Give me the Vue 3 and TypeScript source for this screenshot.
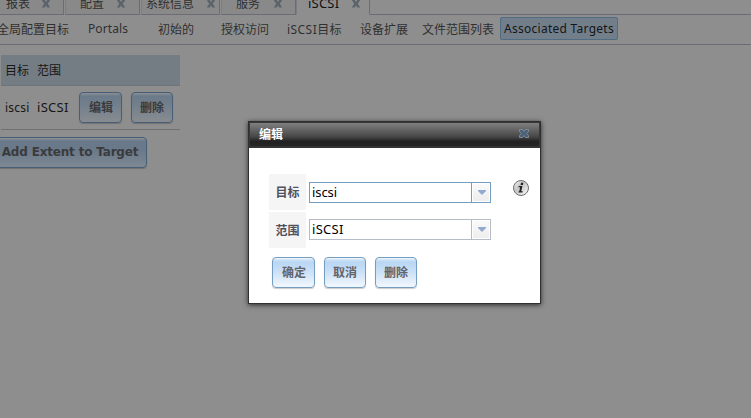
<script setup lang="ts">
import { ref } from 'vue'

interface Tab { label: string; cls: string; active?: boolean }
interface NavItem { label: string; cls: string; active?: boolean }

const tabs: Tab[] = [
  { label: '报表', cls: 't-report' },
  { label: '配置', cls: 't-config' },
  { label: '系统信息', cls: 't-system' },
  { label: '服务', cls: 't-service' },
  { label: 'iSCSI', cls: 't-iscsi', active: true },
]

const nav: NavItem[] = [
  { label: '全局配置目标', cls: 'n-global' },
  { label: 'Portals', cls: 'n-portals' },
  { label: '初始的', cls: 'n-init' },
  { label: '授权访问', cls: 'n-auth' },
  { label: 'iSCSI目标', cls: 'n-target' },
  { label: '设备扩展', cls: 'n-device' },
  { label: '文件范围列表', cls: 'n-file' },
  { label: 'Associated Targets', cls: 'n-assoc', active: true },
]

const fields = ref([
  { label: '目标', value: 'iscsi', focused: true },
  { label: '范围', value: 'iSCSI', focused: false },
])
const actions = ['确定', '取消', '删除']
</script>

<template>
  <div class="page">
    <div class="tabs">
      <div v-for="t in tabs" :key="t.label" class="tab" :class="[t.cls, { active: t.active }]">
        <span class="tab-label">{{ t.label }}</span>
        <svg class="x" width="10" height="10" viewBox="0 0 10 10"><path d="M.8 0h2.900L5 2.100 6.300 0h2.900L6.800 3.800l2.400 3.800H6.300L5 5.500 3.700 7.600H.8l2.400-3.800z" /></svg>
      </div>
      <div class="tab-rest"></div>
    </div>
    <div class="nav">
      <span v-for="n in nav" :key="n.label" class="nav-item" :class="[n.cls, { selected: n.active }]">{{ n.label }}</span>
    </div>
    <div class="content">
      <div class="grid">
        <div class="head"><span class="c1">目标</span><span>范围</span></div>
        <div class="row">
          <span class="c1 lat">iscsi</span><span class="c2 lat">iSCSI</span>
          <button class="btn dim b43">编辑</button>
          <button class="btn dim">删除</button>
        </div>
      </div>
      <button class="btn dim add">Add Extent to Target</button>
    </div>

    <div class="overlay">
      <div class="dialog">
        <div class="title">
          <span>编辑</span>
          <svg width="12" height="11" viewBox="0 0 12 11"><path d="M1.500 1.500h3L6 3.500l1.500-2h3v2l-1.700 2 1.700 2v2h-3L6 7.500l-1.500 2h-3v-2l1.700-2-1.700-2z" fill="#4a6178" stroke="#7d8b97" stroke-width="1" /></svg>
        </div>
        <div class="body">
          <div v-for="(f, i) in fields" :key="f.label" class="field">
            <div class="label">{{ f.label }}</div>
            <div class="combo" :class="{ focused: f.focused }">
              <span class="value">{{ f.value }}</span>
              <span class="arrow"><svg width="8" height="5" viewBox="0 0 8 5"><path d="M0 0h8v1L5 4v.5H3V4L0 1z" fill="#94a9d0" /></svg></span>
            </div>
            <svg v-if="i === 0" class="info" width="18" height="18" viewBox="0 0 18 18">
              <defs><linearGradient id="ig" x1="0" y1="0" x2="1" y2="1"><stop offset="0" stop-color="#fafafa" /><stop offset=".4" stop-color="#c4c4c4" /><stop offset="1" stop-color="#fff" /></linearGradient></defs>
              <circle cx="9" cy="9" r="7.500" fill="url(#ig)" stroke="#6d6d6d" />
              <path d="M9 3.700h2.300L10.900 6H8.600zM6.700 7h3.700L9.300 12.200h1.500l-.3 1.200H6.400l.3-1.200h.6l.8-3.900H6.500z" fill="#222" />
            </svg>
          </div>
          <div class="actions">
            <button v-for="(a, i) in actions" :key="a" class="btn" :class="{ b43: i === 0 }">{{ a }}</button>
          </div>
        </div>
      </div>
    </div>
  </div>
</template>

<style>
body { background: #8e8e8e; overflow: hidden; }
</style>

<style scoped>
* { box-sizing: border-box; }
.page {
  position: relative; width: 751px; height: 418px; overflow: hidden;
  background: #8e8e8e; color: #303030;
  font: 12px/16px "Noto Sans", "Noto Sans CJK SC", sans-serif;
}
.tabs { display: flex; height: 15px; }
.tab {
  display: flex; justify-content: space-between; height: 15px; flex: none;
  border-right: 1px solid #6b6c76; border-bottom: 1px solid #6b6c76;
  border-left: 1px solid #7c7d84; background: #898989;
}
.tab-label { margin-top: -4px; height: 17px; white-space: nowrap; }
.x { fill: #5b636c; flex: none; }
.t-report { width: 64px; padding: 0 12px 0 6px; border-left: 0; }
.t-config { width: 75px; margin-left: 1px; padding: 0 13px 0 14px; }
.t-system { width: 79px; margin-left: 1px; padding: 0 3px 0 4px; }
.t-service { width: 75px; margin-left: 1px; padding: 0 12px 0 14px; }
.t-iscsi { width: 74px; padding: 0 8px 0 11px; color: #111; font-size: 13px; }
.t-iscsi .tab-label { margin-top: -5px; letter-spacing: .2px; }
.tab.active { background: #8e8e8e; border-bottom-color: #8e8e8e; }
.tab-rest { flex: 1; border-bottom: 1px solid #6b6c76; }

.nav { display: flex; height: 30px; border-bottom: 1px solid #6b6c76; padding-top: 2px; }
.nav-item { flex: none; height: 23px; line-height: 25px; white-space: nowrap; }
.n-global { width: 90px; margin-left: -3px; margin-right: 1px; }
.n-portals { width: 70px; letter-spacing: .1px; line-height: 23px; }
.n-init { width: 63px; }
.n-auth { width: 66px; }
.n-target { width: 73px; letter-spacing: .45px; }
.n-device { width: 62px; }
.n-file { width: 78px; }
.n-assoc { width: 118px; letter-spacing: .27px; }
.selected {
  border: 1px solid #4f6c83; border-radius: 2px; background: #727f8b; color: #151515;
  text-align: center; line-height: 21px;
}

.content { padding: 10px 0 0; }
.grid { width: 179px; margin-left: 1px; color: #161616; }
.head { display: flex; height: 31px; align-items: center; padding-left: 4px; background: #757d84; border-bottom: 1px solid #6e7478; }
.head span { margin-top: 1px; }
.row { display: flex; height: 44px; align-items: center; padding-left: 4px; border-bottom: 1px solid #707070; }
.c1 { width: 32px; }
.c2 { width: 42px; }
.lat { letter-spacing: .2px; }
.c2.lat { margin-top: -2px; font-size: 13px; letter-spacing: .3px; }
.row .btn + .btn { margin-left: 9px; }

.btn {
  width: 42px; height: 31px; padding: 0; flex: none; white-space: nowrap;
  border: 1px solid #759dc0; border-radius: 4px; color: #63636b;
  background: linear-gradient(#fff 0, #d9e9f9 1px, #b9d6f3 4px, #c9dff6 13px, #f0f6fd 28px);
  box-shadow: 0 1px 1px rgba(0, 0, 0, .2);
  font: bold 12px/27px "Noto Sans", "Noto Sans CJK SC", sans-serif;
}
.b43 { width: 43px; padding-left: 1px; }
.btn.dim {
  border-color: #465f76; color: #3b3b3d;
  background: linear-gradient(#8e9296 0, #6b7a89 3px, #73808d 13px, #878b8f 28px);
}
.btn.add {
  display: block; width: 157px; margin: 7px 0 0 -10px; padding-left: 3px;
  background: linear-gradient(#8e9296 0, #687989 3px, #6b7989 13px, #7c8791 28px);
  font-family: "DejaVu Sans", sans-serif; font-size: 12px; letter-spacing: -.18px;
}

.overlay { position: absolute; left: 0; top: 0; width: 751px; height: 418px; padding: 121px 0 0 248px; }
.dialog {
  width: 293px; height: 183px; background: #fff; border: 1px solid #303030;
  box-shadow: 0 1px 5px rgba(0, 0, 0, .7);
}
.title {
  display: flex; justify-content: space-between; align-items: center; height: 26px;
  padding: 1px 9px 0 9px; border: 1px solid #383838; border-bottom: 2px solid #343434;
  background: linear-gradient(#808080, #464646 60%, #222 80%, #252525);
  color: #fff; font-weight: bold;
}
.title svg { margin-top: -3px; }
.body { padding: 26px 0 0 20px; }
.field { display: flex; height: 36px; margin-bottom: 2px; align-items: center; }
.label {
  width: 37px; height: 36px; line-height: 37px; text-align: center;
  background: #f5f5f5; color: #51515e; font-weight: bold;
}
.combo {
  display: flex; width: 182px; height: 21px; margin: -1px 0 0 3px;
  border: 1px solid #b5bcc7; background: #fff; color: #000;
}
.combo.focused { margin-top: 0; }
.combo.focused, .combo.focused .arrow { border-color: #759dc0; }
.value { flex: 1; padding-left: 2px; line-height: 19px; font-size: 13px; letter-spacing: .3px; }
.focused .value { letter-spacing: -.1px; }
.arrow {
  display: flex; width: 19px; align-items: center; justify-content: center; padding-left: 1px;
  border-left: 1px solid #b5bcc7; box-shadow: inset 0 0 0 1px #fff;
  background: linear-gradient(#fafafa, #ededed);
}
.info { margin: -9px 0 0 21px; }
.actions { display: flex; gap: 9px; padding: 7px 0 0 3px; }
</style>
